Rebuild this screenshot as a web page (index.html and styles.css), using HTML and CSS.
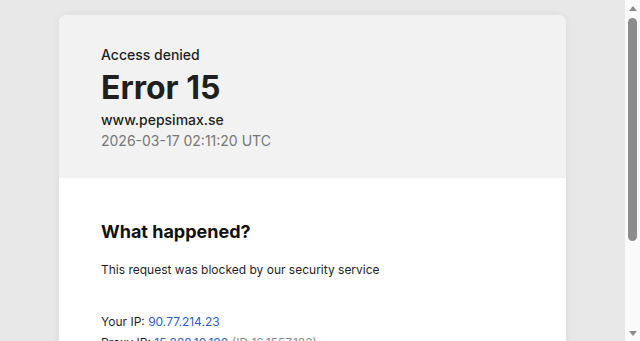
FILE: index.html
```html
<!DOCTYPE html>
<html lang="en">
<head>
<meta charset="utf-8">
<title>Access denied | www.pepsimax.se</title>
<link rel="stylesheet" href="styles.css">
</head>
<body>
<main class="card">
  <header class="card-head">
    <p class="kicker">Access denied</p>
    <h1 class="title">Error 15</h1>
    <p class="host">www.pepsimax.se</p>
    <p class="time">2026-03-17 02:11:20 UTC</p>
  </header>
  <section class="card-body">
    <h2 class="section-title">What happened?</h2>
    <p class="desc">This request was blocked by our security service</p>
    <dl class="meta">
      <div class="meta-row"><dt>Your IP:</dt> <dd><a href="#">90.77.214.23</a></dd></div>
      <div class="meta-row"><dt>Proxy IP:</dt> <dd><a href="#">15.228.10.100</a> <span class="muted">(ID 16.1557.123)</span></dd></div>
      <div class="meta-row"><dt>Incident ID:</dt> <dd>15-6572019462931788</dd></div>
    </dl>
  </section>
</main>
<div class="scrollbar" aria-hidden="true">
  <span class="sb-arrow sb-up"></span>
  <span class="sb-track"><span class="sb-thumb"></span></span>
  <span class="sb-arrow sb-down"></span>
</div>
</body>
</html>
```

FILE: styles.css
```css
html, body {
  margin: 0;
  padding: 0;
}
html {
  background: #e8e8e8;
}
body {
  background: #e8e8e8;
  font-family: Inter, "Noto Sans", sans-serif;
  color: #1f1f1f;
  padding: 15px 15px 56px 0;
}
.card {
  width: 507px;
  margin: 0 auto;
  background: #ffffff;
  border-radius: 8px;
  overflow: hidden;
  box-shadow: 0 0 10px rgba(0, 0, 0, 0.06);
}
.card-head {
  background: #f2f2f2;
  padding: 31px 42px 27px;
}
.kicker {
  margin: 0;
  font-size: 14px;
  line-height: 18px;
  font-weight: 500;
}
.title {
  margin: 4px 0 0;
  font-size: 32px;
  line-height: 40px;
  font-weight: 700;
}
.host {
  margin: 2px 0 0;
  font-size: 14px;
  line-height: 20px;
  font-weight: 500;
}
.time {
  margin: 1px 0 0;
  font-size: 14px;
  line-height: 20px;
  color: #777777;
}
.card-body {
  padding: 42px 42px 40px;
}
.section-title {
  margin: 0;
  font-size: 18px;
  line-height: 24px;
  font-weight: 700;
  color: #111111;
}
.desc {
  margin: 17px 0 0;
  font-size: 12px;
  line-height: 18px;
}
.meta {
  margin: 32px 0 0;
  font-size: 12px;
  line-height: 21px;
}
.meta-row dt, .meta-row dd {
  display: inline;
  margin: 0;
}
.meta a {
  color: #2e5fc2;
  text-decoration: none;
}
.muted {
  color: #8a8a8a;
}

/* simulated classic scrollbar */
.scrollbar {
  position: fixed;
  top: 0;
  right: 0;
  width: 15px;
  height: 100vh;
  background: #fafafa;
  display: flex;
  flex-direction: column;
  align-items: center;
}
.sb-arrow {
  flex: 0 0 15px;
  display: flex;
  align-items: center;
  justify-content: center;
}
.sb-arrow::before {
  content: "";
  width: 0;
  height: 0;
  border-left: 4px solid transparent;
  border-right: 4px solid transparent;
}
.sb-up::before {
  border-bottom: 5px solid #8c8c8c;
  margin-top: 1px;
}
.sb-down::before {
  border-top: 5px solid #8c8c8c;
  margin-bottom: 1px;
}
.sb-track {
  flex: 1 1 auto;
  width: 100%;
  display: flex;
  justify-content: center;
}
.sb-thumb {
  width: 9px;
  height: 223px;
  margin-top: 3px;
  background: #8c8c8c;
  border-radius: 5px;
}
```
